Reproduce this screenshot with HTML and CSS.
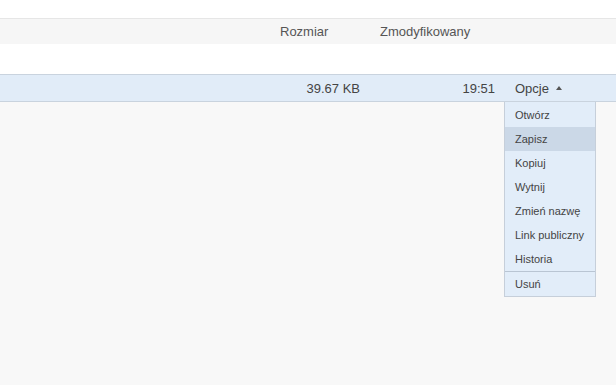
FILE: index.html
```html
<!DOCTYPE html>
<html lang="pl">
<head>
<meta charset="utf-8">
<title>Pliki</title>
<link rel="stylesheet" href="styles.css">
</head>
<body>
<div class="top"></div>
<div class="header cols">
  <div class="c-name"></div>
  <div class="c-size">Rozmiar</div>
  <div class="c-mod">Zmodyfikowany</div>
  <div class="c-opt"></div>
</div>
<div class="spacer"></div>
<div class="row cols">
  <div class="c-name"></div>
  <div class="c-size right">39.67 KB</div>
  <div class="c-mod right">19:51</div>
  <div class="c-opt">Opcje <span class="caret"></span></div>
  <ul class="menu">
    <li>Otwórz</li>
    <li class="active">Zapisz</li>
    <li>Kopiuj</li>
    <li>Wytnij</li>
    <li>Zmień nazwę</li>
    <li>Link publiczny</li>
    <li>Historia</li>
    <li class="sep">Usuń</li>
  </ul>
</div>
</body>
</html>
```

FILE: styles.css
```css
html, body {
  margin: 0;
  padding: 0;
}
body {
  background: #f8f8f8;
  font-family: "Liberation Sans", Arial, sans-serif;
  color: #444;
  width: 616px;
  height: 385px;
  overflow: hidden;
}
.top {
  height: 18px;
  background: #ffffff;
}
.cols {
  display: grid;
  grid-template-columns: 1fr 80px 115px 101px;
  column-gap: 20px;
  align-items: center;
  font-size: 13px;
}
.header {
  height: 25px;
  border-top: 1px solid #e6e6e6;
  background: #f6f6f6;
  color: #555;
}
.spacer {
  height: 30px;
  background: #ffffff;
}
.row {
  position: relative;
  height: 26px;
  border-top: 1px solid #c9d3de;
  border-bottom: 1px solid #c9d3de;
  background: #e1ecf8;
  color: #444;
}
.right {
  text-align: right;
}
.caret {
  display: inline-block;
  width: 0;
  height: 0;
  margin-left: 3px;
  vertical-align: 3px;
  border-left: 3px solid transparent;
  border-right: 3px solid transparent;
  border-bottom: 4px solid #555;
}
.menu {
  position: absolute;
  top: calc(100% + 1px);
  left: 504px;
  width: 90px;
  margin: 0;
  padding: 1px 0 0;
  list-style: none;
  background: #e2edf9;
  border: 1px solid #c6cfda;
  border-top: none;
  font-size: 11px;
  color: #444;
}
.menu li {
  height: 24px;
  line-height: 24px;
  padding-left: 10px;
}
.menu li.active {
  background: #cbd8e7;
}
.menu li.sep {
  border-top: 1px solid #b9c5d3;
}
```
